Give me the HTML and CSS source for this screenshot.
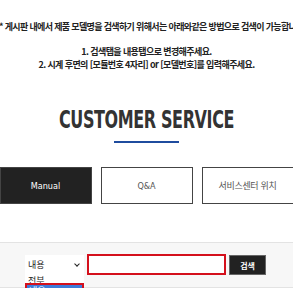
FILE: index.html
```html
<!DOCTYPE html>
<html lang="ko">
<head>
  <meta charset="UTF-8">
  <meta name="viewport" content="width=device-width, initial-scale=1.0">
  <title>Customer Service</title>
  <link rel="stylesheet" href="styles.css">
</head>
<body>

<div class="notice">
  <p class="notice-lead">* 게시판 내에서 제품 모델명을 검색하기 위해서는 아래와같은 방법으로 검색이 가능합니다.</p>
  <p class="notice-step">1. 검색탭을 내용탭으로 변경해주세요.</p>
  <p class="notice-step">2. 시계 후면의 [모듈번호 4자리] or [모델번호]를 입력해주세요.</p>
</div>

<h2 class="title">CUSTOMER SERVICE</h2>
<div class="title-line"></div>

<div class="tabs">
  <div class="tab active">Manual</div>
  <div class="tab">Q&amp;A</div>
  <div class="tab tab-kr">서비스센터 위치</div>
</div>

<div class="search">
  <div class="select">
    <span class="select-value">내용</span>
    <span class="chevron"></span>
    <div class="options">
      <div class="option first">전부</div>
      <div class="option selected">내용</div>
    </div>
  </div>
  <div class="keyword"></div>
  <button class="search-btn">검색</button>
</div>

</body>
</html>
```

FILE: styles.css
```css
body {
  margin: 0;
  width: 293px;
  font-family: "Noto Sans CJK KR", "Noto Sans", sans-serif;
  color: #222;
  background-color: white;
}
p {
  margin: 0;
}
.notice {
  padding-top: 20px;
  text-align: center;
  font-size: 9px;
  line-height: 13px;
  font-weight: bold;
  letter-spacing: -0.6px;
}
.notice-lead {
  display: flex;
  justify-content: center;
  white-space: nowrap;
  margin-bottom: 12px;
  padding-left: 12px;
  letter-spacing: -0.65px;
}
.title {
  margin: 37px 0 0;
  font-family: "DejaVu Sans Condensed", sans-serif;
  font-size: 24px;
  line-height: 24px;
  font-weight: bold;
  color: #333;
  text-align: center;
  transform: scaleX(0.74);
  letter-spacing: -0.5px;
}
.title-line {
  width: 65px;
  height: 2px;
  margin: 9px auto 0;
  background-color: #1f4c9e;
}
.tabs {
  display: flex;
  justify-content: center;
  gap: 9px;
  margin-top: 24px;
}
.tab {
  flex: none;
  width: 92px;
  height: 37px;
  box-sizing: border-box;
  border: 1px solid #444;
  display: flex;
  align-items: center;
  justify-content: center;
  font-family: "DejaVu Sans Condensed", sans-serif;
  font-size: 9px;
  color: #555;
}
.tab.active {
  background-color: #222;
  color: white;
}
.tab-kr {
  font-family: "Noto Sans CJK KR", sans-serif;
  letter-spacing: -0.3px;
}
.search {
  margin-top: 38px;
  width: 300px;
  height: 46px;
  box-sizing: border-box;
  border-top: 1px solid #e3e3e3;
  border-bottom: 1px solid #e3e3e3;
  background-color: #f7f7f7;
  display: flex;
  justify-content: center;
  align-items: flex-start;
  gap: 3px;
  padding: 11px 9px 0 0;
}
.select {
  position: relative;
  width: 59px;
  height: 20px;
  margin-top: 1px;
  background-color: white;
  font-size: 9px;
  line-height: 20px;
  padding: 0 5px 0 3px;
  box-sizing: border-box;
  display: flex;
  justify-content: space-between;
  align-items: center;
}
.chevron {
  width: 3px;
  height: 3px;
  margin-top: -3px;
  border-right: 1px solid #222;
  border-bottom: 1px solid #222;
  transform: rotate(45deg);
}
.options {
  position: absolute;
  top: 20px;
  left: 0;
  width: 59px;
  background-color: white;
}
.option {
  line-height: 11px;
  padding-left: 3px;
}
.option.first {
  height: 8px;
  overflow: hidden;
}
.option.selected {
  height: 15px;
  line-height: 12px;
  box-sizing: border-box;
  border: 2px solid #d4101c;
  padding-left: 2px;
  background-color: #3d7bd9;
  color: white;
}
.keyword {
  width: 139px;
  height: 21px;
  box-sizing: border-box;
  border: 2px solid #d4101c;
  background-color: white;
}
.search-btn {
  width: 37px;
  height: 20px;
  margin-top: 1px;
  border: 1px solid #666;
  background-color: #222;
  color: white;
  font-family: "Noto Sans CJK KR", sans-serif;
  font-size: 8px;
  font-weight: bold;
  padding: 0;
}
```
